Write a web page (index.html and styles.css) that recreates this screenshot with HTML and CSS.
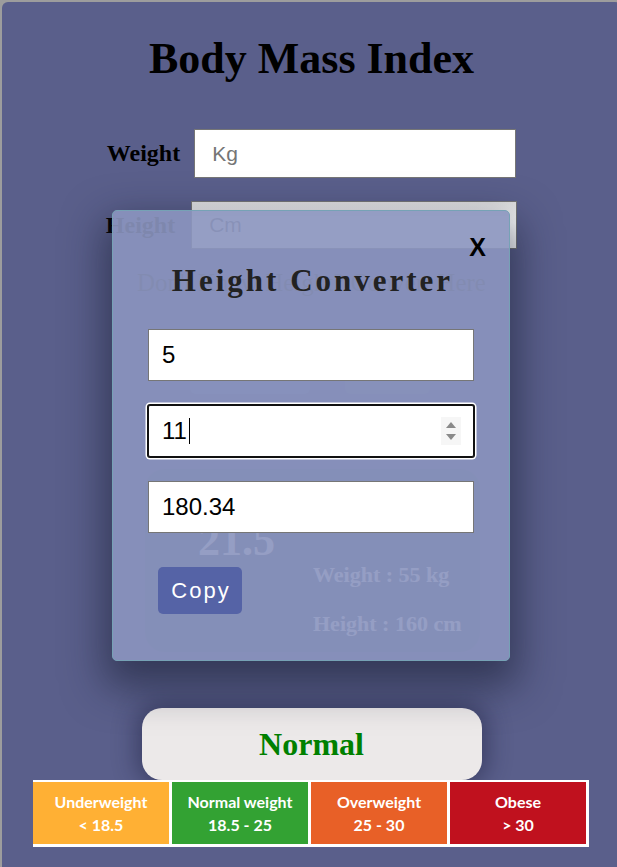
FILE: index.html
```html
<!DOCTYPE html>
<html lang="en">
<head>
<meta charset="utf-8">
<title>Body Mass Index</title>
<link rel="stylesheet" href="styles.css">
</head>
<body>
<main class="card">
  <h1 class="title">Body Mass Index</h1>
  <div class="field-row">
    <label class="field-label" for="weight">Weight</label>
    <input class="field-input" id="weight" type="text" placeholder="Kg">
  </div>
  <div class="field-row field-row--height">
    <label class="field-label" for="height">Height</label>
    <input class="field-input" id="height" type="text" placeholder="Cm">
  </div>
  <p class="hint">Don't Know Height? Convert Here</p>
  <div class="actions">
    <span class="ghost-btn"></span>
    <span class="ghost-btn ghost-btn--alt"></span>
  </div>
  <section class="result">
    <div class="bmi-value">21.5</div>
    <div class="bmi-details">
      <p>Weight : 55 kg</p>
      <p>Height : 160 cm</p>
    </div>
  </section>
  <div class="status">Normal</div>
  <div class="scale">
    <div class="scale-cell scale-cell--under">Underweight<br>&lt; 18.5</div>
    <div class="scale-cell scale-cell--normal">Normal weight<br>18.5 - 25</div>
    <div class="scale-cell scale-cell--over">Overweight<br>25 - 30</div>
    <div class="scale-cell scale-cell--obese">Obese<br>&gt; 30</div>
  </div>
</main>

<div class="modal">
  <button class="modal-close" type="button">X</button>
  <h2 class="modal-title">Height Converter</h2>
  <input class="conv-input conv-input--first" type="text" value="5">
  <div class="conv-input conv-input--focus">
    <span>11</span><span class="caret"></span>
    <svg class="spinner" width="20" height="28" viewBox="0 0 20 28">
      <rect width="20" height="28" fill="#f6f6f6"/>
      <path d="M5 11 L10 5 L15 11 Z" fill="#8a8a8a"/>
      <path d="M5 17 L15 17 L10 23 Z" fill="#8a8a8a"/>
    </svg>
  </div>
  <input class="conv-input" type="text" value="180.34">
  <button class="copy-btn" type="button">Copy</button>
</div>
</body>
</html>
```
FILE: styles.css
```css
html {
  overflow: hidden;
  background: #9d9d9d;
}

body {
  margin: 0;
  background: #9d9d9d;
  font-family: "Liberation Serif", serif;
}

.card {
  margin: 2px 0 0 2px;
  width: 619px;
  min-height: 900px;
  box-sizing: border-box;
  padding-top: 31px;
  background: #5a5f8b;
  border-radius: 6px;
}

.title {
  margin: 0;
  font: bold 44px/52px "Liberation Serif", serif;
  text-align: center;
  color: #000;
}

.field-row {
  display: flex;
  justify-content: center;
  align-items: center;
  gap: 14px;
  margin-top: 44px;
}

.field-row--height {
  margin-top: 23px;
  gap: 16px;
}

.field-label {
  font: bold 24px "Liberation Serif", serif;
  color: #000;
}

.field-input {
  width: 322px;
  height: 49px;
  box-sizing: border-box;
  margin: 0;
  padding: 0 17px;
  border: 1px solid #767676;
  background: #fff;
  font: 21px "Liberation Sans", sans-serif;
  color: #000;
}

.field-input::placeholder {
  color: #757575;
}

.field-row--height .field-input {
  width: 326px;
  height: 48px;
  background: linear-gradient(#e1e1e1, #ffffff 45%);
}

.hint {
  margin: 19px 0 0;
  font: 25px/30px "Liberation Serif", serif;
  text-align: center;
  color: #333;
}

.actions {
  display: flex;
  height: 40px;
  margin-top: 56px;
}

.ghost-btn {
  width: 120px;
  height: 40px;
  margin-left: 188px;
  border-radius: 6px;
  background: #6872a6;
}

.ghost-btn--alt {
  width: 85px;
  margin-left: 35px;
  background: #6a6d8c;
}

.result {
  display: flex;
  width: 335px;
  height: 183px;
  box-sizing: border-box;
  margin: 75px 0 0 143px;
  padding-left: 53px;
  border-radius: 20px;
  background: #4a5a78;
}

.bmi-value {
  width: 115px;
  margin-top: 47px;
  font: bold 44px/50px "Liberation Serif", serif;
  color: #fff;
}

.bmi-details {
  margin-top: 93px;
}

.bmi-details p {
  margin: 0;
  font: bold 22px/26px "Liberation Serif", serif;
  color: #fff;
}

.bmi-details p + p {
  margin-top: 23px;
}

.status {
  display: flex;
  justify-content: center;
  align-items: center;
  width: 340px;
  height: 72px;
  margin: 56px auto 0;
  border-radius: 20px;
  background: #ece9e9;
  box-shadow: 0 0 25px 5px rgba(20, 22, 50, 0.45);
  font: bold 32px "Liberation Serif", serif;
  color: #008000;
}

.scale {
  display: grid;
  grid-template-columns: repeat(4, 1fr);
  gap: 3px;
  width: 556px;
  height: 67px;
  box-sizing: border-box;
  margin-left: 31px;
  padding: 2px 3px 3px 0;
  background: #fff;
}

.scale-cell {
  display: flex;
  align-items: center;
  justify-content: center;
  text-align: center;
  font: bold 16px/23px Lato, "Liberation Sans", sans-serif;
  color: #fff;
}

.scale-cell--under { background: #ffb034; }
.scale-cell--normal { background: #33a233; }
.scale-cell--over { background: #e86027; }
.scale-cell--obese { background: #c0111e; }

.modal {
  position: absolute;
  left: 112px;
  top: 210px;
  width: 398px;
  height: 451px;
  box-sizing: border-box;
  padding: 52px 35px 0;
  border: 1px solid #76a2b5;
  border-radius: 5px;
  background: rgba(139, 148, 190, 0.91);
  box-shadow: 0 18px 40px 8px rgba(20, 25, 45, 0.55);
}

.modal-close {
  position: absolute;
  top: 24px;
  right: 23px;
  padding: 0;
  border: none;
  background: none;
  font: bold 25px/25px "Liberation Sans", sans-serif;
  color: #000;
}

.modal-title {
  margin: 0;
  font: bold 31px/36px "Liberation Serif", serif;
  letter-spacing: 3px;
  text-indent: 3px;
  text-align: center;
  color: #222;
}

.conv-input {
  display: block;
  width: 326px;
  height: 52px;
  box-sizing: border-box;
  margin: 24px 0 0;
  padding: 0 13px;
  border: 1px solid #767676;
  background: #fff;
  font: 24px "Liberation Sans", sans-serif;
  color: #000;
}

.conv-input--first {
  margin-top: 30px;
}

.conv-input--focus {
  display: flex;
  align-items: center;
  border: 1px solid #111;
  border-radius: 2px;
  box-shadow: 0 0 0 1px #111, 0 0 0 2.5px #fff;
}

.caret {
  width: 1px;
  height: 26px;
  margin-left: 2px;
  background: #000;
}

.spinner {
  margin-left: auto;
  margin-right: -1px;
}

.copy-btn {
  display: block;
  width: 84px;
  height: 47px;
  margin: 34px 0 0 10px;
  padding: 0 0 0 2px;
  border: none;
  border-radius: 5px;
  background: #5563a6;
  font: 22px "Liberation Sans", sans-serif;
  letter-spacing: 2px;
  color: #fff;
}
```
